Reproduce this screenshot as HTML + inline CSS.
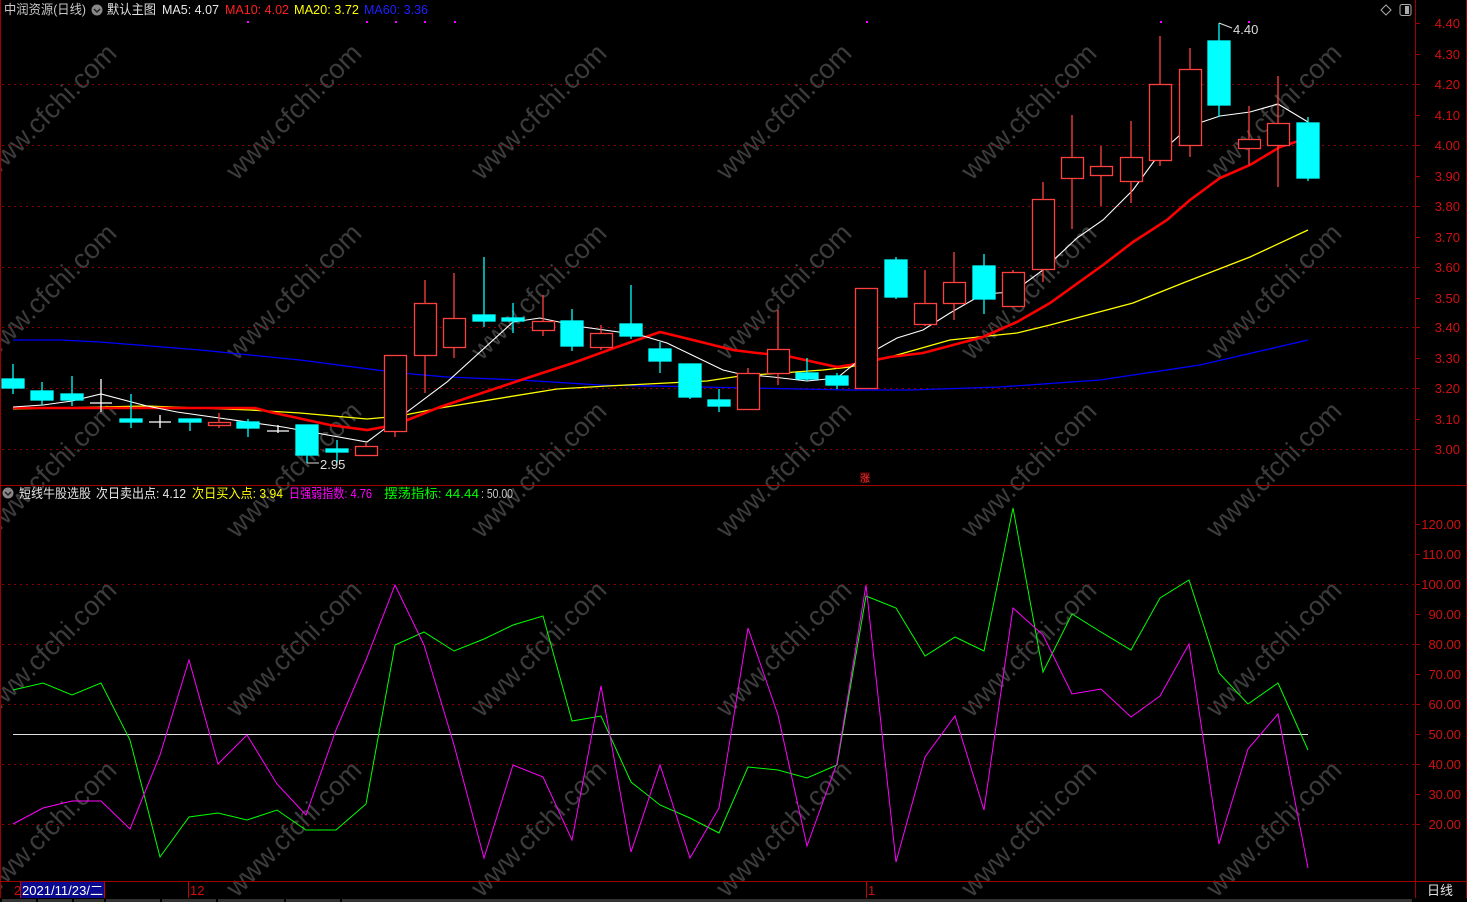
<!DOCTYPE html>
<html><head><meta charset="utf-8"><style>
html,body{margin:0;padding:0;background:#000;width:1467px;height:902px;overflow:hidden}
svg{display:block}
text{font-family:"Liberation Sans","Noto Sans CJK SC",sans-serif}
</style></head><body>
<svg width="1467" height="902" xmlns="http://www.w3.org/2000/svg">
<rect width="1467" height="902" fill="#000"/>
<!-- watermarks -->
<g fill="#3c3c3c" font-size="27" font-family="Liberation Sans,sans-serif">
<g transform="translate(55,118) rotate(-45)"><text text-anchor="middle">www.cfchi.com</text></g>
<g transform="translate(300,118) rotate(-45)"><text text-anchor="middle">www.cfchi.com</text></g>
<g transform="translate(545,118) rotate(-45)"><text text-anchor="middle">www.cfchi.com</text></g>
<g transform="translate(790,118) rotate(-45)"><text text-anchor="middle">www.cfchi.com</text></g>
<g transform="translate(1035,118) rotate(-45)"><text text-anchor="middle">www.cfchi.com</text></g>
<g transform="translate(1280,118) rotate(-45)"><text text-anchor="middle">www.cfchi.com</text></g>
<g transform="translate(55,298) rotate(-45)"><text text-anchor="middle">www.cfchi.com</text></g>
<g transform="translate(300,298) rotate(-45)"><text text-anchor="middle">www.cfchi.com</text></g>
<g transform="translate(545,298) rotate(-45)"><text text-anchor="middle">www.cfchi.com</text></g>
<g transform="translate(790,298) rotate(-45)"><text text-anchor="middle">www.cfchi.com</text></g>
<g transform="translate(1035,298) rotate(-45)"><text text-anchor="middle">www.cfchi.com</text></g>
<g transform="translate(1280,298) rotate(-45)"><text text-anchor="middle">www.cfchi.com</text></g>
<g transform="translate(55,476) rotate(-45)"><text text-anchor="middle">www.cfchi.com</text></g>
<g transform="translate(300,476) rotate(-45)"><text text-anchor="middle">www.cfchi.com</text></g>
<g transform="translate(545,476) rotate(-45)"><text text-anchor="middle">www.cfchi.com</text></g>
<g transform="translate(790,476) rotate(-45)"><text text-anchor="middle">www.cfchi.com</text></g>
<g transform="translate(1035,476) rotate(-45)"><text text-anchor="middle">www.cfchi.com</text></g>
<g transform="translate(1280,476) rotate(-45)"><text text-anchor="middle">www.cfchi.com</text></g>
<g transform="translate(55,655) rotate(-45)"><text text-anchor="middle">www.cfchi.com</text></g>
<g transform="translate(300,655) rotate(-45)"><text text-anchor="middle">www.cfchi.com</text></g>
<g transform="translate(545,655) rotate(-45)"><text text-anchor="middle">www.cfchi.com</text></g>
<g transform="translate(790,655) rotate(-45)"><text text-anchor="middle">www.cfchi.com</text></g>
<g transform="translate(1035,655) rotate(-45)"><text text-anchor="middle">www.cfchi.com</text></g>
<g transform="translate(1280,655) rotate(-45)"><text text-anchor="middle">www.cfchi.com</text></g>
<g transform="translate(55,835) rotate(-45)"><text text-anchor="middle">www.cfchi.com</text></g>
<g transform="translate(300,835) rotate(-45)"><text text-anchor="middle">www.cfchi.com</text></g>
<g transform="translate(545,835) rotate(-45)"><text text-anchor="middle">www.cfchi.com</text></g>
<g transform="translate(790,835) rotate(-45)"><text text-anchor="middle">www.cfchi.com</text></g>
<g transform="translate(1035,835) rotate(-45)"><text text-anchor="middle">www.cfchi.com</text></g>
<g transform="translate(1280,835) rotate(-45)"><text text-anchor="middle">www.cfchi.com</text></g>
</g>
<!-- grid -->
<g stroke="#8a0000" stroke-width="1" stroke-dasharray="2,4">
<line x1="2" y1="84.5" x2="1414" y2="84.5"/><line x1="2" y1="145.5" x2="1414" y2="145.5"/>
<line x1="2" y1="206.5" x2="1414" y2="206.5"/><line x1="2" y1="267.5" x2="1414" y2="267.5"/>
<line x1="2" y1="327.5" x2="1414" y2="327.5"/><line x1="2" y1="388.5" x2="1414" y2="388.5"/>
<line x1="2" y1="449.5" x2="1414" y2="449.5"/>
<line x1="2" y1="584.5" x2="1414" y2="584.5"/><line x1="2" y1="644.5" x2="1414" y2="644.5"/>
<line x1="2" y1="704.5" x2="1414" y2="704.5"/><line x1="2" y1="764.5" x2="1414" y2="764.5"/>
<line x1="2" y1="824.5" x2="1414" y2="824.5"/>
</g>
<!-- frame -->
<g stroke="#a00000" stroke-width="1">
<line x1="0.5" y1="0" x2="0.5" y2="898"/>
<line x1="1415.5" y1="0" x2="1415.5" y2="898"/>
<line x1="0" y1="485.5" x2="1467" y2="485.5"/>
<line x1="0" y1="881.5" x2="1467" y2="881.5"/>
<line x1="1466.5" y1="0" x2="1466.5" y2="898"/>
</g>
<!-- axis ticks & labels -->
<g stroke="#a00000"><line x1="1415" y1="23.5" x2="1420" y2="23.5"/><line x1="1415" y1="54.5" x2="1420" y2="54.5"/><line x1="1415" y1="84.5" x2="1420" y2="84.5"/><line x1="1415" y1="115.5" x2="1420" y2="115.5"/><line x1="1415" y1="145.5" x2="1420" y2="145.5"/><line x1="1415" y1="176.5" x2="1420" y2="176.5"/><line x1="1415" y1="206.5" x2="1420" y2="206.5"/><line x1="1415" y1="237.5" x2="1420" y2="237.5"/><line x1="1415" y1="267.5" x2="1420" y2="267.5"/><line x1="1415" y1="298.5" x2="1420" y2="298.5"/><line x1="1415" y1="327.5" x2="1420" y2="327.5"/><line x1="1415" y1="358.5" x2="1420" y2="358.5"/><line x1="1415" y1="388.5" x2="1420" y2="388.5"/><line x1="1415" y1="419.5" x2="1420" y2="419.5"/><line x1="1415" y1="449.5" x2="1420" y2="449.5"/>
<line x1="1415" y1="524.5" x2="1420" y2="524.5"/><line x1="1415" y1="554.5" x2="1420" y2="554.5"/><line x1="1415" y1="584.5" x2="1420" y2="584.5"/><line x1="1415" y1="614.5" x2="1420" y2="614.5"/><line x1="1415" y1="644.5" x2="1420" y2="644.5"/><line x1="1415" y1="674.5" x2="1420" y2="674.5"/><line x1="1415" y1="704.5" x2="1420" y2="704.5"/><line x1="1415" y1="734.5" x2="1420" y2="734.5"/><line x1="1415" y1="764.5" x2="1420" y2="764.5"/><line x1="1415" y1="794.5" x2="1420" y2="794.5"/><line x1="1415" y1="824.5" x2="1420" y2="824.5"/></g>
<g fill="#d01010" font-size="13" text-anchor="end">
<text x="1460" y="28">4.40</text><text x="1460" y="59">4.30</text><text x="1460" y="89">4.20</text><text x="1460" y="120">4.10</text><text x="1460" y="150">4.00</text><text x="1460" y="181">3.90</text><text x="1460" y="211">3.80</text><text x="1460" y="242">3.70</text><text x="1460" y="272">3.60</text><text x="1460" y="303">3.50</text><text x="1460" y="332">3.40</text><text x="1460" y="363">3.30</text><text x="1460" y="393">3.20</text><text x="1460" y="424">3.10</text><text x="1460" y="454">3.00</text>
<text x="1461" y="529">120.00</text><text x="1461" y="559">110.00</text><text x="1461" y="589">100.00</text><text x="1461" y="619">90.00</text><text x="1461" y="649">80.00</text><text x="1461" y="679">70.00</text><text x="1461" y="709">60.00</text><text x="1461" y="739">50.00</text><text x="1461" y="769">40.00</text><text x="1461" y="799">30.00</text><text x="1461" y="829">20.00</text>
</g>
<!-- top-right icons -->
<path d="M1386 5 L1391 10 L1386 15 L1381 10 Z" fill="none" stroke="#aaa"/>
<rect x="1400" y="4.5" width="11" height="11" rx="2" fill="none" stroke="#aaa"/><rect x="1405" y="6" width="4" height="8" fill="#aaa"/>
<!-- magenta dots -->
<g fill="#ff00ff"><rect x="247" y="21" width="2" height="2"/><rect x="366" y="21" width="2" height="2"/><rect x="395" y="21" width="2" height="2"/><rect x="424" y="21" width="2" height="2"/><rect x="454" y="21" width="2" height="2"/><rect x="866" y="21" width="2" height="2"/><rect x="1160" y="21" width="2" height="2"/><rect x="1248" y="21" width="2" height="2"/></g>

<!-- MA60 -->
<polyline fill="none" stroke="#0000ff" stroke-width="1.3" points="13,340 60,340 100,342 200,350 300,360 400,373 447,377 520,380 600,385 700,387 800,389 850,390 910,390 1000,387 1100,380 1200,365 1308,340"/>
<!-- MA20 -->
<polyline fill="none" stroke="#ffff00" stroke-width="1.3" points="13,409 147,406 250,410 300,413 367,419 400,416 440,408 557,389 607,386 707,381 740,376 823,370 850,367 890,357 950,340 1017,333 1050,325 1133,303 1183,283 1250,257 1308,230"/>
<!-- MA10 -->
<polyline fill="none" stroke="#ff0000" stroke-width="2.6" points="13,408 147,408 255,408 270,412 330,425 367,430 395,425 440,407 527,378 573,363 617,347 660,332 693,340 733,350 757,353 787,356 837,367 850,365 890,357 923,353 983,337 1017,322 1050,303 1103,265 1133,242 1167,220 1190,200 1220,178 1250,165 1280,147 1308,138"/>
<!-- MA5 -->
<polyline fill="none" stroke="#ffffff" stroke-width="1.1" points="13,407 43,405 72,401 101,394 147,406 177,412 283,427 367,442 447,382 513,322 540,318 583,327 640,335 667,343 723,370 740,374 773,377 807,381 837,378 863,357 897,338 923,330 950,313 983,294 1013,292 1043,270 1077,238 1103,220 1133,190 1160,153 1190,126 1220,116 1250,112 1278,104 1308,122"/>

<!-- candles -->
<g stroke="#00ffff" fill="#00ffff" stroke-width="1.3">
<line x1="13" y1="364" x2="13" y2="394"/><rect x="2" y="379" width="22" height="9"/>
<line x1="42" y1="382" x2="42" y2="405"/><rect x="31" y="391" width="22" height="9"/>
<line x1="72" y1="376" x2="72" y2="406"/><rect x="61" y="394" width="22" height="6"/>
<line x1="131" y1="394" x2="131" y2="428"/><rect x="120" y="419" width="22" height="3"/>
<line x1="190" y1="419" x2="190" y2="431"/><rect x="179" y="419" width="22" height="3"/>
<line x1="248" y1="419" x2="248" y2="437"/><rect x="237" y="422" width="22" height="6"/>
<line x1="307" y1="425" x2="307" y2="463"/><rect x="296" y="425" width="22" height="30"/>
<line x1="337" y1="440" x2="337" y2="463"/><rect x="326" y="449" width="22" height="3"/>
<line x1="484" y1="257" x2="484" y2="327"/><rect x="473" y="315" width="22" height="6"/>
<line x1="513" y1="303" x2="513" y2="333"/><rect x="502" y="318" width="22" height="3"/>
<line x1="572" y1="309" x2="572" y2="351"/><rect x="561" y="321" width="22" height="25"/>
<line x1="631" y1="285" x2="631" y2="339"/><rect x="620" y="324" width="22" height="12"/>
<line x1="660" y1="342" x2="660" y2="373"/><rect x="649" y="349" width="22" height="12"/>
<line x1="690" y1="364" x2="690" y2="399"/><rect x="679" y="364" width="22" height="33"/>
<line x1="719" y1="389" x2="719" y2="412"/><rect x="708" y="400" width="22" height="6"/>
<line x1="807" y1="358" x2="807" y2="381"/><rect x="796" y="373" width="22" height="6"/>
<line x1="837" y1="373" x2="837" y2="389"/><rect x="826" y="376" width="22" height="9"/>
<line x1="896" y1="257" x2="896" y2="299"/><rect x="885" y="260" width="22" height="37"/>
<line x1="984" y1="254" x2="984" y2="314"/><rect x="973" y="266" width="22" height="33"/>
<line x1="1219" y1="23" x2="1219" y2="117"/><rect x="1208" y="41" width="22" height="64"/>
<line x1="1308" y1="117" x2="1308" y2="181"/><rect x="1297" y="123" width="22" height="55"/>
</g>
<g stroke="#ff4040" fill="#000" stroke-width="1.3">
<line x1="219" y1="413" x2="219" y2="428"/><rect x="208.5" y="422.5" width="22" height="3"/>
<line x1="366" y1="443" x2="366" y2="455"/><rect x="355.5" y="446.5" width="22" height="9"/>
<line x1="395" y1="355" x2="395" y2="437"/><rect x="384.5" y="355.5" width="22" height="76"/>
<line x1="425" y1="280" x2="425" y2="393"/><rect x="414.5" y="303.5" width="22" height="52"/>
<line x1="454" y1="273" x2="454" y2="358"/><rect x="443.5" y="318.5" width="22" height="29"/>
<line x1="543" y1="295" x2="543" y2="336"/><rect x="532.5" y="321.5" width="22" height="9"/>
<line x1="601" y1="325" x2="601" y2="350"/><rect x="590.5" y="333.5" width="22" height="14"/>
<line x1="748" y1="368" x2="748" y2="409"/><rect x="737.5" y="373.5" width="22" height="36"/>
<line x1="778" y1="310" x2="778" y2="385"/><rect x="767.5" y="349.5" width="22" height="24"/>
<line x1="866" y1="288" x2="866" y2="388"/><rect x="855.5" y="288.5" width="22" height="100"/>
<line x1="925" y1="270" x2="925" y2="326"/><rect x="914.5" y="303.5" width="22" height="21"/>
<line x1="954" y1="252" x2="954" y2="320"/><rect x="943.5" y="282.5" width="22" height="21"/>
<line x1="1013" y1="270" x2="1013" y2="306"/><rect x="1002.5" y="272.5" width="22" height="34"/>
<line x1="1043" y1="182" x2="1043" y2="282"/><rect x="1032.5" y="199.5" width="22" height="70"/>
<line x1="1072" y1="115" x2="1072" y2="229"/><rect x="1061.5" y="157.5" width="22" height="21"/>
<line x1="1101" y1="146" x2="1101" y2="206"/><rect x="1090.5" y="166.5" width="22" height="9"/>
<line x1="1131" y1="121" x2="1131" y2="203"/><rect x="1120.5" y="157.5" width="22" height="24"/>
<line x1="1160" y1="36" x2="1160" y2="166"/><rect x="1149.5" y="84.5" width="22" height="76"/>
<line x1="1190" y1="48" x2="1190" y2="157"/><rect x="1179.5" y="69.5" width="22" height="76"/>
<line x1="1249" y1="106" x2="1249" y2="165"/><rect x="1238.5" y="139.5" width="22" height="9"/>
<line x1="1278" y1="76" x2="1278" y2="187"/><rect x="1267.5" y="123.5" width="22" height="22"/>
</g>
<g stroke="#ffffff" stroke-width="1.3">
<line x1="101" y1="379" x2="101" y2="412"/><line x1="90" y1="403" x2="112" y2="403"/>
<line x1="160" y1="415" x2="160" y2="428"/><line x1="149" y1="422" x2="171" y2="422"/>
<line x1="278" y1="425" x2="278" y2="433"/><line x1="267" y1="431" x2="289" y2="431"/>
</g>
<!-- hi/lo labels -->
<g fill="#ddd" font-size="13"><text x="1233" y="34">4.40</text><text x="320" y="469">2.95</text></g>
<path d="M1219 23 L1232 28" stroke="#ddd" fill="none"/><path d="M307 463 L319 463" stroke="#ddd"/>
<rect x="860" y="472" width="10" height="10" fill="#300"/><text x="860" y="482" fill="#f33" font-size="10">涨</text>

<!-- header -->
<g font-size="13">
<text x="4" y="14" fill="#c8c8c8" textLength="82" lengthAdjust="spacingAndGlyphs">中润资源(日线)</text>
<circle cx="97" cy="10" r="5.5" fill="#888"/><path d="M94 9 L97 12 L100 9" stroke="#222" fill="none" stroke-width="1.5"/>
<text x="107" y="14" fill="#e0e0e0" textLength="49" lengthAdjust="spacingAndGlyphs">默认主图</text>
<text x="162" y="14" fill="#e8e8e8" textLength="57" lengthAdjust="spacingAndGlyphs">MA5: 4.07</text>
<text x="225" y="14" fill="#ff2020" textLength="64" lengthAdjust="spacingAndGlyphs">MA10: 4.02</text>
<text x="294" y="14" fill="#ffff00" textLength="65" lengthAdjust="spacingAndGlyphs">MA20: 3.72</text>
<text x="364" y="14" fill="#2020ff" textLength="64" lengthAdjust="spacingAndGlyphs">MA60: 3.36</text>
<circle cx="8" cy="493" r="5.5" fill="#888"/><path d="M5 492 L8 495 L11 492" stroke="#222" fill="none" stroke-width="1.5"/>
<text x="19" y="498" fill="#e0e0e0" textLength="72" lengthAdjust="spacingAndGlyphs">短线牛股选股</text>
<text x="96" y="498" fill="#e8e8e8" textLength="90" lengthAdjust="spacingAndGlyphs">次日卖出点: 4.12</text>
<text x="192" y="498" fill="#ffff00" textLength="91" lengthAdjust="spacingAndGlyphs">次日买入点: 3.94</text>
<text x="289" y="498" fill="#ff00ff" textLength="83" lengthAdjust="spacingAndGlyphs">日强弱指数: 4.76</text>
<text x="384" y="498" fill="#00ff00" textLength="95" lengthAdjust="spacingAndGlyphs">摆荡指标: 44.44</text>
<text x="481" y="498" fill="#c8c8c8" textLength="32" lengthAdjust="spacingAndGlyphs">: 50.00</text>
</g>

<!-- indicator -->
<line x1="13" y1="734.5" x2="1308" y2="734.5" stroke="#e0e0e0" stroke-width="1"/>
<polyline fill="none" stroke="#00ff00" stroke-width="1" points="13,690 43,683 72,695 101,683 130,740 160,857 189,817 218,813 247,820 277,810 306,830 336,830 366,804 395,645 424,632 454,651 484,639 513,625 543,616 572,721 601,716 631,782 660,805 690,818 719,833 748,767 778,770 807,778 837,765 866,596 896,608 925,656 955,637 984,651 1013,508 1043,672 1072,614 1101,632 1131,650 1160,598 1189,580 1219,673 1248,704 1278,683 1308,750"/>
<polyline fill="none" stroke="#ff00ff" stroke-width="1" points="13,824 43,808 72,801 101,801 130,829 160,755 189,660 218,764 247,735 277,784 306,815 336,730 366,660 395,585 424,645 454,745 484,858 513,765 543,777 572,840 601,686 631,852 660,765 690,858 719,808 748,628 778,715 807,846 837,763 866,585 896,862 925,757 955,716 984,810 1013,608 1043,635 1072,694 1101,689 1131,717 1160,696 1189,644 1219,844 1248,749 1278,714 1308,868"/>

<!-- bottom date bar -->
<rect x="20" y="882" width="85" height="16" fill="#0a0a90"/>
<line x1="20.5" y1="882" x2="20.5" y2="898" stroke="#c00"/><line x1="104.5" y1="882" x2="104.5" y2="898" stroke="#c00"/>
<line x1="188.5" y1="882" x2="188.5" y2="898" stroke="#c00"/><line x1="866.5" y1="882" x2="866.5" y2="898" stroke="#c00"/>
<g font-size="13"><text x="14" y="895" fill="#d01010">2</text><text x="22" y="895" fill="#fff" textLength="81" lengthAdjust="spacingAndGlyphs">2021/11/23/二</text>
<text x="190" y="895" fill="#d01010">12</text><text x="868" y="895" fill="#d01010">1</text>
<text x="1427" y="895" fill="#e0e0e0">日线</text></g>
<g fill="#333"><rect x="2" y="899" width="34" height="3"/><rect x="38" y="899" width="34" height="3"/><rect x="74" y="899" width="30" height="3"/><rect x="106" y="899" width="54" height="3"/><rect x="162" y="899" width="54" height="3"/><rect x="218" y="899" width="66" height="3"/><rect x="286" y="899" width="54" height="3"/><rect x="342" y="899" width="1070" height="3"/></g>
</svg>
</body></html>
